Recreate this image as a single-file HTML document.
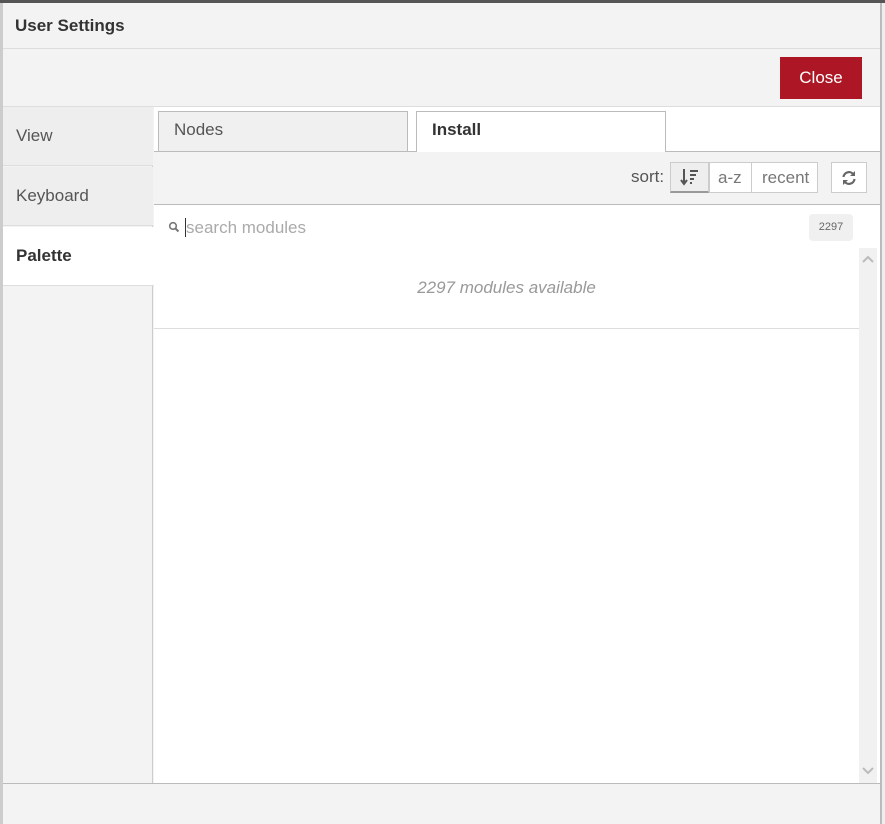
<!DOCTYPE html>
<html><head><style>
*{box-sizing:border-box;margin:0;padding:0}
body{width:885px;height:824px;background:#f3f3f3;font-family:"Liberation Sans",sans-serif;position:relative;overflow:hidden;color:#555}
.a{position:absolute}
</style></head><body>
<div class="a" style="left:0;top:0;width:885px;height:3px;background:#555"></div>
<div class="a" style="left:0;top:3px;width:3px;height:821px;background:#ccc"></div>
<div class="a" style="left:880px;top:3px;width:2px;height:821px;background:#bbb"></div>
<div class="a" style="left:882px;top:3px;width:3px;height:821px;background:#eee"></div>
<div class="a" style="left:3px;top:3px;width:877px;height:821px;background:#f3f3f3"></div>
<div class="a" style="left:15px;top:16px;font-size:17px;font-weight:bold;color:#333">User Settings</div>
<div class="a" style="left:3px;top:48px;width:877px;height:1px;background:#ddd"></div>
<div class="a" style="left:780px;top:57px;width:82px;height:42px;background:#ad1625;color:#fff;font-size:17px;text-align:center;line-height:42px">Close</div>
<div class="a" style="left:3px;top:106px;width:877px;height:1px;background:#ddd"></div>
<div class="a" style="left:3px;top:107px;width:150px;height:676px;background:#f3f3f3;border-right:1px solid #ccc"></div>
<div class="a" style="left:3px;top:107px;width:150px;height:59px;border-bottom:1px solid #ddd;background:#eee"></div>
<div class="a" style="left:16px;top:126px;font-size:17px">View</div>
<div class="a" style="left:3px;top:167px;width:150px;height:59px;border-bottom:1px solid #ddd;background:#eee"></div>
<div class="a" style="left:16px;top:186px;font-size:17px">Keyboard</div>
<div class="a" style="left:3px;top:227px;width:151px;height:59px;border-bottom:1px solid #ddd;background:#fff"></div>
<div class="a" style="left:16px;top:246px;font-size:17px;font-weight:bold;color:#333">Palette</div>
<div class="a" style="left:154px;top:107px;width:726px;height:676px;background:#fff"></div>
<div class="a" style="left:158px;top:111px;width:250px;height:41px;background:#f0f0f0;border:1px solid #bbb"></div>
<div class="a" style="left:174px;top:120px;font-size:17px">Nodes</div>
<div class="a" style="left:416px;top:111px;width:250px;height:41px;background:#fff;border:1px solid #bbb;border-bottom:none"></div>
<div class="a" style="left:432px;top:120px;font-size:17px;font-weight:bold;color:#333">Install</div>
<div class="a" style="left:154px;top:151px;width:726px;height:54px;background:#f3f3f3;border-top:1px solid #bbb;border-bottom:1px solid #bbb"></div>
<div class="a" style="left:417px;top:150px;width:248px;height:2px;background:#fff"></div>
<div class="a" style="left:631px;top:167px;font-size:17px;color:#555">sort:</div>
<div class="a" style="left:670px;top:162px;width:148px;height:31px;background:#fff;border:1px solid #ccc"></div>
<div class="a" style="left:670px;top:162px;width:39px;height:31px;background:#eee;border:1px solid #ccc;border-bottom:2px solid #999"></div>
<svg class="a" style="left:680px;top:168px" width="20" height="20" viewBox="0 0 20 20"><path d="M4 1v14M1 12l3 4 3-4" stroke="#555" stroke-width="2" fill="none"/><path d="M10 3h8M10 7h6M10 11h4M10 15h2" stroke="#555" stroke-width="2"/></svg>
<div class="a" style="left:709px;top:162px;width:1px;height:31px;background:#ccc"></div>
<div class="a" style="left:751px;top:162px;width:1px;height:31px;background:#ccc"></div>
<div class="a" style="left:718px;top:168px;font-size:17px;color:#777">a-z</div>
<div class="a" style="left:762px;top:168px;font-size:17px;color:#777">recent</div>
<div class="a" style="left:831px;top:162px;width:36px;height:31px;background:#fff;border:1px solid #ccc"></div>
<svg class="a" style="left:841px;top:170px" width="16" height="16" viewBox="0 0 16 16"><path d="M2.5 7A5.5 5.5 0 0 1 12.5 4.5M13.5 9A5.5 5.5 0 0 1 3.5 11.5" stroke="#666" stroke-width="2.2" fill="none"/><path d="M14 1v5h-5zM2 15v-5h5z" fill="#666"/></svg>
<svg class="a" style="left:168px;top:221px" width="12" height="12" viewBox="0 0 12 12"><circle cx="5" cy="5" r="3.3" stroke="#777" stroke-width="1.6" fill="none"/><path d="M7.5 7.5l3 3" stroke="#777" stroke-width="2"/></svg>
<div class="a" style="left:185px;top:218px;width:1px;height:19px;background:#333"></div>
<div class="a" style="left:186px;top:218px;font-size:17px;color:#aaa">search modules</div>
<div class="a" style="left:809px;top:214px;width:44px;height:27px;background:#f0f0f0;border-radius:4px;font-size:11px;color:#666;text-align:center;line-height:27px">2297</div>
<div class="a" style="left:859px;top:248px;width:18px;height:535px;background:#f1f1f1"></div>
<svg class="a" style="left:862px;top:254px" width="12" height="10"><path d="M1 8l5-5 5 5" stroke="#bbb" stroke-width="2" fill="none"/></svg>
<svg class="a" style="left:862px;top:766px" width="12" height="10"><path d="M1 2l5 5 5-5" stroke="#bbb" stroke-width="2" fill="none"/></svg>
<div class="a" style="left:154px;top:278px;width:705px;text-align:center;font-size:17px;font-style:italic;color:#999">2297 modules available</div>
<div class="a" style="left:154px;top:328px;width:705px;height:1px;background:#ddd"></div>
<div class="a" style="left:3px;top:783px;width:877px;height:1px;background:#bbb"></div>
</body></html>
